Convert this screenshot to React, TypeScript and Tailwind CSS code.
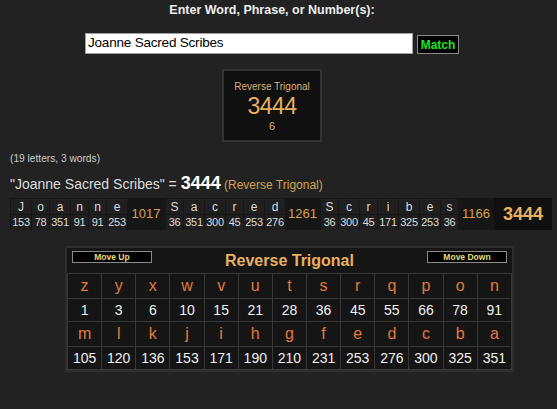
const words: { letters: string[]; values: number[]; sum: number }[] = [
  { letters: ['J', 'o', 'a', 'n', 'n', 'e'], values: [153, 78, 351, 91, 91, 253], sum: 1017 },
  { letters: ['S', 'a', 'c', 'r', 'e', 'd'], values: [36, 351, 300, 45, 253, 276], sum: 1261 },
  { letters: ['S', 'c', 'r', 'i', 'b', 'e', 's'], values: [36, 300, 45, 171, 325, 253, 36], sum: 1166 },
]

const sumWidths = ['w-[38px]', 'w-[35px]', 'w-[36px]']

const chartRows: { letters: string[]; values: number[] }[] = [
  {
    letters: ['z', 'y', 'x', 'w', 'v', 'u', 't', 's', 'r', 'q', 'p', 'o', 'n'],
    values: [1, 3, 6, 10, 15, 21, 28, 36, 45, 55, 66, 78, 91],
  },
  {
    letters: ['m', 'l', 'k', 'j', 'i', 'h', 'g', 'f', 'e', 'd', 'c', 'b', 'a'],
    values: [105, 120, 136, 153, 171, 190, 210, 231, 253, 276, 300, 325, 351],
  },
]

function WordGroup({ letters, values }: { letters: string[]; values: number[] }) {
  return (
    <div className="flex gap-[1px] pl-[1px] py-[1px]">
      {letters.map((l, i) => (
        <div key={i} className={`flex flex-col gap-[1px] ${values[i] > 99 ? 'w-[20px]' : 'w-[17px]'}`}>
          <div className="flex h-[15px] items-center justify-center bg-[#1f1f1f] text-[12px] text-[#dcdcdc]">{l}</div>
          <div className="flex h-[15px] items-center justify-center bg-[#1f1f1f] text-[11px] tracking-[-0.3px] text-[#dcdcdc]">
            {values[i]}
          </div>
        </div>
      ))}
    </div>
  )
}

function MoveButton({ label }: { label: string }) {
  return (
    <button className="flex h-[12px] w-[80px] items-center justify-center border border-[#8a8a8a] bg-black text-[8.5px] font-bold leading-none text-[#e6dc78]">
      {label}
    </button>
  )
}

export default function App() {
  return (
    <div className="h-[409px] w-full overflow-hidden bg-[#222222] font-['Liberation_Sans',Arial,sans-serif]">
      <div className="flex w-[544px] flex-col items-center">
        <div className="pt-[2px] text-[12.5px] font-bold leading-[16px] text-[#eeeeee]">Enter Word, Phrase, or Number(s):</div>
        <div className="mt-[15px] flex items-center gap-[4px]">
          <div className="flex h-[21px] w-[328px] items-center border border-[#a0a0a0] bg-white pl-[2px] text-[13.5px] tracking-[-0.2px] text-black">
            Joanne Sacred Scribes
          </div>
          <button className="mt-[2px] flex h-[19px] w-[42px] items-center justify-center border border-[#8a8a8a] bg-black text-[12px] font-bold text-[#22e022]">
            Match
          </button>
        </div>
        <div className="mt-[15px] flex h-[73px] w-[100px] flex-col items-center border-2 border-[#333333] bg-[#101010] pt-[10px]">
          <div className="text-[10px] leading-[12px] text-[#d8b070]">Reverse Trigonal</div>
          <div className="mt-[1px] text-[23px] leading-[24px] tracking-[-0.5px] text-[#e8b060]">3444</div>
          <div className="mt-[2px] text-[11px] leading-[12px] text-[#d8b070]">6</div>
        </div>
      </div>

      <div className="mt-[11px] pl-[10px] text-[10.2px] leading-[12px] text-[#cccccc]">(19 letters, 3 words)</div>
      <div className="mt-[8px] flex items-baseline pl-[10px] leading-[20px]">
        <span className="text-[14px] text-[#dddddd]">"Joanne Sacred Scribes" =&nbsp;</span>
        <span className="text-[18px] font-bold text-white">3444</span>
        <span className="text-[12px] text-[#d4a050]">&nbsp;(Reverse Trigonal)</span>
      </div>

      <div className="ml-[10px] mt-[3px] flex h-[32px] w-[542px] bg-[#161616]">
        {words.map((w, i) => (
          <div key={i} className="flex">
            <WordGroup letters={w.letters} values={w.values} />
            <div className={`flex items-center justify-center text-[13px] text-[#d6a050] ${sumWidths[i]}`}>{w.sum}</div>
          </div>
        ))}
        <div className="flex flex-1 items-center justify-center bg-[#101010] text-[18px] font-bold text-[#e8b060]">3444</div>
      </div>

      <div className="ml-[65px] mt-[16px] w-[449px] border-2 border-[#2e2e2e] bg-[#151515]">
        <div className="flex h-[25px] items-start justify-between px-[5px] pt-[3px]">
          <MoveButton label="Move Up" />
          <div className="text-[16px] font-bold leading-[20px] text-[#e8b060]">Reverse Trigonal</div>
          <MoveButton label="Move Down" />
        </div>
        <table className="w-full table-fixed">
          <tbody>
            {chartRows.map((r, ri) => (
              <>
                <tr key={`l${ri}`} className="h-[25px]">
                  {r.letters.map((l) => (
                    <td key={l} className="border border-[#383838] text-center text-[16px] text-[#e07a3c]">
                      {l}
                    </td>
                  ))}
                </tr>
                <tr key={`v${ri}`} className="h-[23px]">
                  {r.values.map((v) => (
                    <td key={v} className="border border-[#383838] text-center text-[14px] text-[#f0f0f0]">
                      {v}
                    </td>
                  ))}
                </tr>
              </>
            ))}
          </tbody>
        </table>
      </div>
    </div>
  )
}
